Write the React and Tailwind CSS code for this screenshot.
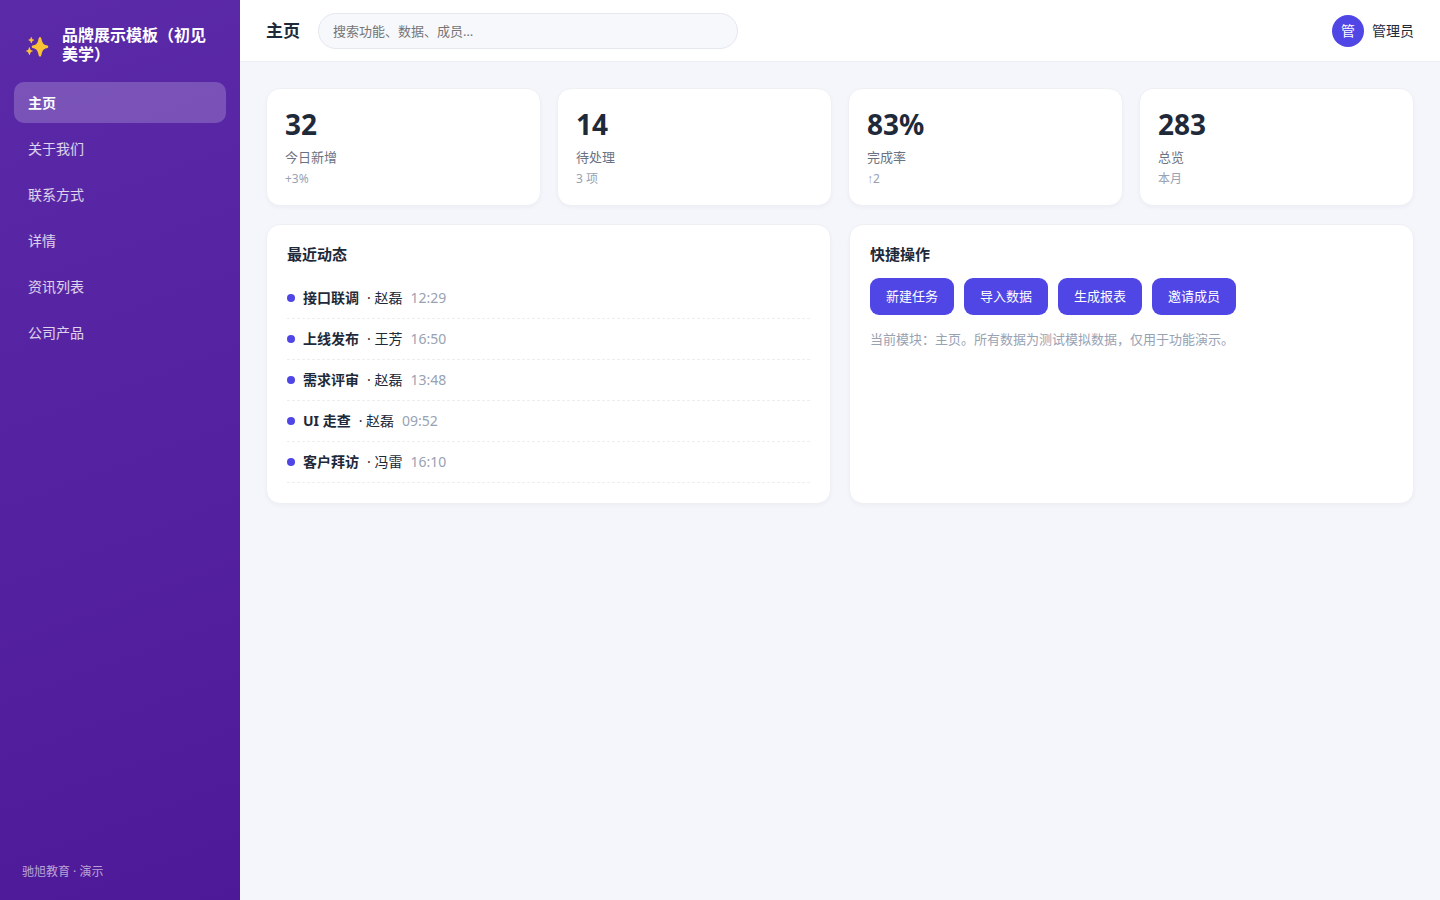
const navItems = ["主页", "关于我们", "联系方式", "详情", "资讯列表", "公司产品"];

const stats = [
  { value: "32", label: "今日新增", note: "+3%" },
  { value: "14", label: "待处理", note: "3 项" },
  { value: "83%", label: "完成率", note: "↑2" },
  { value: "283", label: "总览", note: "本月" },
];

const activities = [
  { title: "接口联调", user: "赵磊", time: "12:29" },
  { title: "上线发布", user: "王芳", time: "16:50" },
  { title: "需求评审", user: "赵磊", time: "13:48" },
  { title: "UI 走查", user: "赵磊", time: "09:52" },
  { title: "客户拜访", user: "冯雷", time: "16:10" },
];

const actions = ["新建任务", "导入数据", "生成报表", "邀请成员"];

const Sparkles = () => (
  <svg className="w-7 h-7 shrink-0" viewBox="0 0 28 28" fill="#fbc236" aria-hidden="true">
    <path d="M18 6c.9 0 1.3.9 1.6 2.4.9 3.9 1.9 5 5 5.9 1.1.3 1.7.8 1.7 1.5s-.6 1.2-1.7 1.5c-3.1.9-4.1 2-5 5.9-.3 1.500-.7 2.300-1.600 2.300s-1.300-.8-1.600-2.300c-.9-3.900-1.900-5-5-5.900-1.100-.3-1.700-.8-1.700-1.500s.6-1.200 1.700-1.500c3.100-.9 4.100-2 5-5.900C16.700 6.900 17.100 6 18 6z" />
    <path d="M9.300 6c.5 0 .8 1.900 1.200 2.200.4.300 1.800.4 1.800.9s-1.400.6-1.800.9c-.4.300-.7 2.200-1.200 2.200s-.8-1.900-1.200-2.200c-.4-.3-1.800-.4-1.800-.9s1.400-.6 1.800-.9C8.500 7.900 8.800 6 9.300 6z" />
    <path d="M7.400 16.200c.6 0 .9 2.300 1.400 2.800.5.500 2.200.5 2.200 1.100s-1.700.6-2.200 1.100c-.5.500-.8 2.800-1.400 2.800s-.9-2.300-1.400-2.800c-.5-.5-2.200-.5-2.200-1.100s1.700-.6 2.200-1.100c.5-.5.8-2.800 1.400-2.800z" />
  </svg>
);

const Sidebar = () => (
  <aside className="w-60 shrink-0 flex flex-col pt-[26px] pb-5 text-white bg-linear-160 from-[#5b2aa9] to-[#4e1998]">
    <div className="flex items-center gap-3 px-[22px]">
      <Sparkles />
      <span className="text-base leading-[19px] font-bold">
        品牌展示模板（初见美学）
      </span>
    </div>

    <nav className="flex flex-col gap-[5px] px-3.5 mt-[18px]">
      {navItems.map((item, index) => (
        <a
          key={item}
          href="#"
          className={
            index === 0
              ? "px-3.5 py-2.5 rounded-[10px] text-sm leading-[21px] font-bold bg-white/20"
              : "px-3.5 py-2.5 rounded-[10px] text-sm leading-[21px] text-white/80 hover:bg-white/10"
          }
        >
          {item}
        </a>
      ))}
    </nav>

    <div className="mt-auto px-[22px] text-xs text-white/60">
      驰旭教育 · 演示
    </div>
  </aside>
);

const Header = () => (
  <header className="h-[62px] flex items-center gap-[18px] px-[26px] bg-white border-b border-[#eceef3]">
    <h1 className="text-[17px] font-bold shrink-0">主页</h1>
    <input
      type="search"
      aria-label="搜索"
      placeholder="搜索功能、数据、成员…"
      className="w-[420px] h-9 px-3.5 rounded-full border border-[#e5e7ef] bg-[#f7f8fc] text-[13px] placeholder:text-[#757575] outline-none"
    />
    <div className="ml-auto flex items-center gap-2 text-sm shrink-0">
      <span className="w-8 h-8 rounded-full bg-[#4f46e5] text-white flex items-center justify-center">
        管
      </span>
      <span>管理员</span>
    </div>
  </header>
);

const App = () => {
  return (
    <div className="min-h-screen flex bg-[#f5f6fb] text-gray-800 font-['Noto_Sans','Liberation_Sans','Noto_Sans_CJK_SC',sans-serif]">
      <Sidebar />

      <div className="flex-1 min-w-0">
        <Header />

        <main className="p-[26px] flex flex-col gap-[18px]">
          {/* Stats */}
          <section className="grid grid-cols-4 gap-4">
            {stats.map((stat) => (
              <div
                key={stat.label}
                className="p-[18px] bg-white border border-[#eef0f4] rounded-[14px] shadow-[0_2px_4px_rgba(30,41,80,0.03)]"
              >
                <div className="text-[28px] leading-[34px] font-bold">{stat.value}</div>
                <div className="mt-1.5 text-[13px] leading-5 text-gray-500">{stat.label}</div>
                <div className="mt-1 text-xs text-[#98a2b3]">{stat.note}</div>
              </div>
            ))}
          </section>

          <div className="grid grid-cols-2 gap-[18px]">
            {/* Recent activity */}
            <section className="p-5 bg-white border border-[#eef0f4] rounded-[14px] shadow-[0_2px_4px_rgba(30,41,80,0.03)]">
              <h2 className="mb-3.5 text-[15px] leading-[19px] font-bold">最近动态</h2>
              <ul>
                {activities.map((activity) => (
                  <li
                    key={activity.title}
                    className="flex items-center gap-2 py-2.5 text-sm border-b border-dashed border-[#eceef2]"
                  >
                    <span className="w-2 h-2 rounded-full bg-[#4f46e5]" />
                    <strong className="font-bold">{activity.title}</strong>
                    <span>· {activity.user}</span>
                    <time className="text-[#98a2b3]">{activity.time}</time>
                  </li>
                ))}
              </ul>
            </section>

            {/* Quick actions */}
            <section className="p-5 bg-white border border-[#eef0f4] rounded-[14px] shadow-[0_2px_4px_rgba(30,41,80,0.03)]">
              <h2 className="mb-3.5 text-[15px] leading-[19px] font-bold">快捷操作</h2>
              <div className="flex flex-wrap gap-2.5">
                {actions.map((action) => (
                  <button
                    key={action}
                    type="button"
                    className="h-[37px] px-4 rounded-[9px] bg-[#4f46e5] text-white text-[13px]"
                  >
                    {action}
                  </button>
                ))}
              </div>
              <p className="mt-3.5 text-[13px] leading-5 text-[#98a2b3]">
                当前模块：主页。所有数据为测试模拟数据，仅用于功能演示。
              </p>
            </section>
          </div>
        </main>
      </div>
    </div>
  );
};

export default App;
